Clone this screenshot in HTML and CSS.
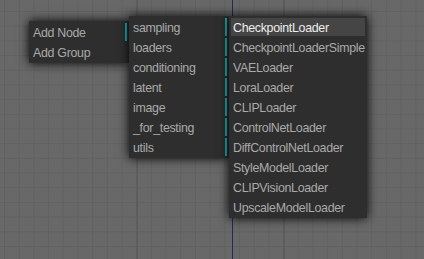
FILE: index.html
```html
<!DOCTYPE html>
<html>
<head lang="en">
    <meta charset="UTF-8">
    <title>Add Node menu</title>
    <link rel="stylesheet" href="styles.css">
</head>
<body>
<div class="canvas">
    <div class="link"></div>

    <div class="menu menu-root">
        <div class="entry has-sub">Add Node</div>
        <div class="entry">Add Group</div>
    </div>

    <div class="menu menu-cat">
        <div class="entry has-sub">sampling</div>
        <div class="entry has-sub">loaders</div>
        <div class="entry has-sub">conditioning</div>
        <div class="entry has-sub">latent</div>
        <div class="entry has-sub">image</div>
        <div class="entry has-sub">_for_testing</div>
        <div class="entry has-sub">utils</div>
    </div>

    <div class="menu menu-nodes">
        <div class="entry hover">CheckpointLoader</div>
        <div class="entry">CheckpointLoaderSimple</div>
        <div class="entry">VAELoader</div>
        <div class="entry">LoraLoader</div>
        <div class="entry">CLIPLoader</div>
        <div class="entry">ControlNetLoader</div>
        <div class="entry">DiffControlNetLoader</div>
        <div class="entry">StyleModelLoader</div>
        <div class="entry">CLIPVisionLoader</div>
        <div class="entry">UpscaleModelLoader</div>
    </div>
</div>
</body>
</html>
```

FILE: styles.css
```css
* {
    margin: 0;
    padding: 0;
}
body {
    background: #686868;
    overflow: hidden;
}
/*画布网格*/
.canvas {
    width: 424px;
    height: 259px;
    position: relative;
    overflow: hidden;
    background-color: #686868;
    background-image:
        linear-gradient(90deg, #5d5d5d 2px, transparent 2px),
        linear-gradient(90deg, #616161 1px, transparent 1px),
        linear-gradient(#616161 1px, transparent 1px);
    background-size: 147px 100%, 14.7px 100%, 100% 14.7px;
    background-position: 136px 0, 4px 0, 0 11px;
}
.link {
    position: absolute;
    left: 232px;
    top: 0;
    width: 1px;
    height: 259px;
    background: #1f2b5c;
}
/*右键菜单*/
.menu {
    position: absolute;
    min-width: 100px;
    background: #2e2e2e;
    box-shadow: 0 0 10px #000;
    font: 12.4px/14px "Liberation Sans", Arial, sans-serif;
    letter-spacing: -0.3px;
    color: #aaa;
}
.menu-root {
    left: 29px;
    top: 21px;
}
.menu-cat {
    left: 129px;
    top: 16px;
    width: 100px;
}
.menu-nodes {
    left: 229px;
    top: 16px;
    width: 138px;
}
.entry {
    margin: 2px;
    padding: 3px 2px 1px;
    white-space: nowrap;
}
.has-sub {
    border-right: 2px solid #16b5b5;
}
.hover {
    background: #454545;
    color: #eee;
}
```
